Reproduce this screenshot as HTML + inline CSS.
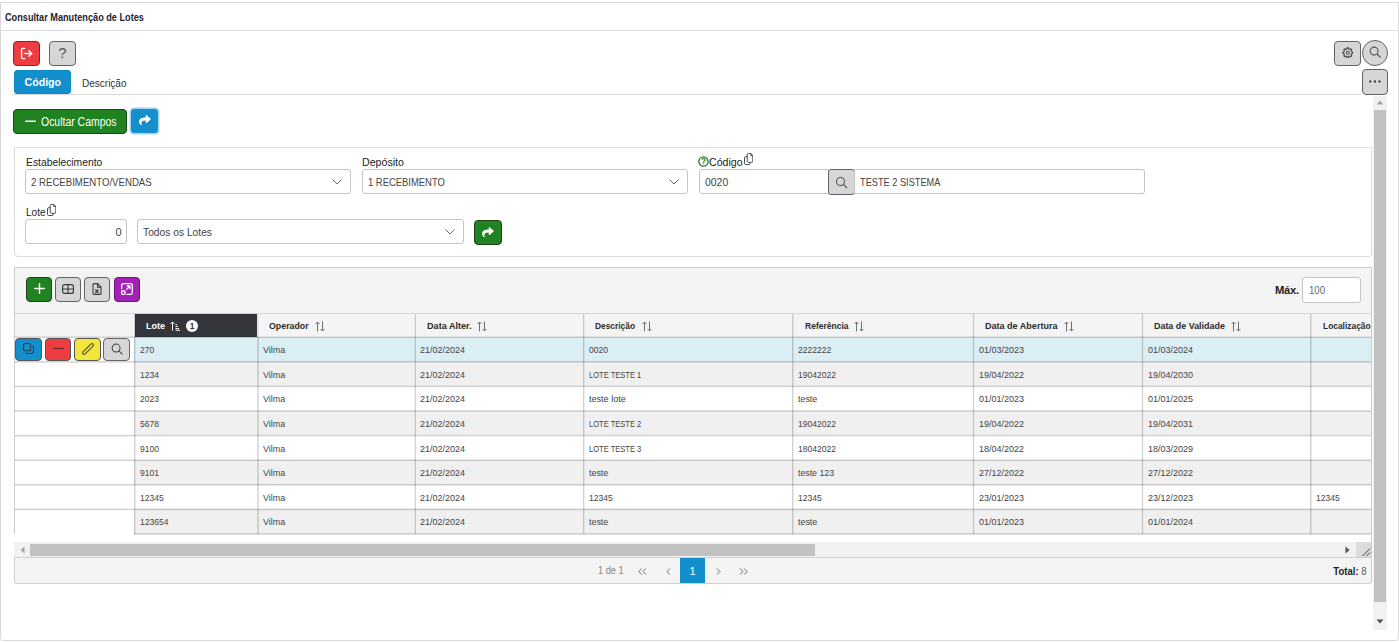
<!DOCTYPE html>
<html lang="pt-BR">
<head>
<meta charset="utf-8">
<title>Consultar Manutenção de Lotes</title>
<style>
*{box-sizing:border-box;margin:0;padding:0}
html,body{width:1399px;height:642px;overflow:hidden;background:#fff}
body{position:relative;font-family:"Liberation Sans","DejaVu Sans",sans-serif;color:#333;font-size:12px}
.abs{position:absolute}
[id]{display:inline-block;transform-origin:0 50%;white-space:nowrap}
.frame{left:0;top:2px;width:1399px;height:639px;border:1px solid #d9d9d9;border-radius:0 0 3px 3px}
.hline{left:1px;height:1px;background:#dedede}
.title{left:5px;top:11px;height:14px;line-height:14px;font-size:10px;font-weight:bold;color:#1f2430;white-space:nowrap}
.btn{border:1px solid #62626a;border-radius:4px;background:#d6d6d6;display:flex;align-items:center;justify-content:center}
.btn svg{display:block}
.u1{position:relative;top:-1px}
.red{background:#ee3d41;border-color:#7a2a2c}
.green{background:#218221;border-color:#1c431c}
.blue{background:#1390cc;border-color:#0d6a99}
.purple{background:#a321b4;border-color:#6a1476}
.yellow{background:#f2e63c;border-color:#7d7720}
.tab{left:14px;top:70px;width:57px;height:24px;background:#1390cc;border:1px solid #0b8ac6;border-radius:3px;color:#fff;font-weight:bold;font-size:11.5px;line-height:22px;text-align:center}
.tab2{left:82px;top:70px;height:24px;line-height:27px;font-size:11px;color:#333}
.panel{border:1px solid #dcdcdc;border-radius:4px;background:#fff}
.lbl{font-size:10.5px;color:#222;height:14px;line-height:14px;white-space:nowrap}
.inp{border:1px solid #c4c4c4;border-radius:3px;background:#fff;height:24px;line-height:22px;font-size:11px;color:#444;padding:0 4.5px;white-space:nowrap;overflow:hidden}
.chev{right:8px;top:9px}
.grid{background:#f4f4f4;border:1px solid #cbcbcb;border-radius:0 0 3px 3px}
.th{top:314px;height:23px;line-height:22px;z-index:2;font-size:9.5px;font-weight:bold;color:#2c2c2c;background:#f4f4f4;white-space:nowrap;overflow:hidden}
.row{left:134px;width:1237px;overflow:hidden}
.ln{z-index:3}
.row i{font-style:normal}
.row span{position:absolute;top:1px;height:calc(100% - 1px);padding-left:4.5px;padding-top:1px;font-size:8.7px;color:#444;white-space:nowrap;display:flex;align-items:center}
.odd{background:#fff}.even{background:#f0f0f0}.sel{background:#daeef4}
/*FIT-START*/
#t_title{transform:scaleX(0.916)}
#t_tab2{transform:scaleX(0.910)}
#t_ocultar{transform:scaleX(0.871)}
#t_estab{transform:scaleX(0.983)}
#t_estabv{transform:scaleX(0.875)}
#t_dep{transform:scaleX(1.013)}
#t_depv{transform:scaleX(0.857)}
#t_cod{transform:scaleX(1.010)}
#t_codv{transform:scaleX(0.948)}
#t_teste2{transform:scaleX(0.838)}
#t_lote{transform:scaleX(0.959)}
#t_todos{transform:scaleX(0.932)}
#t_max{transform:scaleX(1.019)}
#t_100{transform:scaleX(0.871)}
#t_1de1{transform:scaleX(0.907)}
#t_total{transform:scaleX(0.908)}
#h0{transform:scaleX(0.947) translateY(0.6px)}
#h1{transform:scaleX(0.928) translateY(0.6px)}
#h2{transform:scaleX(0.958) translateY(0.6px)}
#h3{transform:scaleX(0.881) translateY(0.6px)}
#h4{transform:scaleX(0.897) translateY(0.6px)}
#h5{transform:scaleX(0.951) translateY(0.6px)}
#h6{transform:scaleX(0.939) translateY(0.6px)}
#h7{transform:scaleX(0.884) translateY(0.6px)}
#c0_0{transform:scaleX(0.981)}
#c0_1{transform:scaleX(1.029)}
#c0_2{transform:scaleX(1.035)}
#c0_3{transform:scaleX(0.981)}
#c0_4{transform:scaleX(0.981)}
#c0_5{transform:scaleX(1.035)}
#c0_6{transform:scaleX(1.035)}
#c1_0{transform:scaleX(0.981)}
#c1_1{transform:scaleX(1.029)}
#c1_2{transform:scaleX(1.035)}
#c1_3{transform:scaleX(0.867)}
#c1_4{transform:scaleX(0.981)}
#c1_5{transform:scaleX(1.035)}
#c1_6{transform:scaleX(1.035)}
#c2_0{transform:scaleX(0.981)}
#c2_1{transform:scaleX(1.029)}
#c2_2{transform:scaleX(1.035)}
#c2_3{transform:scaleX(1.044)}
#c2_4{transform:scaleX(1.024)}
#c2_5{transform:scaleX(1.035)}
#c2_6{transform:scaleX(1.035)}
#c3_0{transform:scaleX(0.981)}
#c3_1{transform:scaleX(1.029)}
#c3_2{transform:scaleX(1.035)}
#c3_3{transform:scaleX(0.867)}
#c3_4{transform:scaleX(0.981)}
#c3_5{transform:scaleX(1.035)}
#c3_6{transform:scaleX(1.035)}
#c4_0{transform:scaleX(0.981)}
#c4_1{transform:scaleX(1.029)}
#c4_2{transform:scaleX(1.035)}
#c4_3{transform:scaleX(0.867)}
#c4_4{transform:scaleX(0.981)}
#c4_5{transform:scaleX(1.035)}
#c4_6{transform:scaleX(1.035)}
#c5_0{transform:scaleX(0.981)}
#c5_1{transform:scaleX(1.029)}
#c5_2{transform:scaleX(1.035)}
#c5_3{transform:scaleX(1.024)}
#c5_4{transform:scaleX(1.007)}
#c5_5{transform:scaleX(1.035)}
#c5_6{transform:scaleX(1.035)}
#c6_0{transform:scaleX(0.980)}
#c6_1{transform:scaleX(1.029)}
#c6_2{transform:scaleX(1.035)}
#c6_3{transform:scaleX(0.980)}
#c6_4{transform:scaleX(0.980)}
#c6_5{transform:scaleX(1.035)}
#c6_6{transform:scaleX(1.035)}
#c6_7{transform:scaleX(0.980)}
#c7_0{transform:scaleX(0.981)}
#c7_1{transform:scaleX(1.029)}
#c7_2{transform:scaleX(1.035)}
#c7_3{transform:scaleX(1.024)}
#c7_4{transform:scaleX(1.024)}
#c7_5{transform:scaleX(1.035)}
#c7_6{transform:scaleX(1.035)}
/*FIT-END*/
</style>
</head>
<body>
<div class="abs frame"></div>
<div class="abs title"><span id="t_title">Consultar Manutenção de Lotes</span></div>
<div class="abs hline" style="top:30px;width:1397px"></div>

<!-- top toolbar -->
<div class="abs btn red" style="left:13px;top:41px;width:27px;height:25px">
<svg width="13" height="13" viewBox="0 0 14 14" fill="none" stroke="#fff" stroke-width="1.5" stroke-linecap="round" stroke-linejoin="round" style="margin-top:-1px"><path d="M5 1.5H2.8C2.1 1.5 1.7 1.9 1.7 2.6v8.8c0 .7.4 1.1 1.1 1.1H5"/><path d="M5.2 7h7.3M9.6 4l3 3-3 3"/></svg>
</div>
<div class="abs btn" style="left:49px;top:41px;width:27px;height:25px;font-size:15px;color:#555;padding-bottom:2px">?</div>
<div class="abs btn" style="left:1334px;top:41px;width:27px;height:25px"><svg width="11.5" height="11.5" viewBox="0 0 13 13" class="u1" fill="none" stroke="#454545" stroke-width="1.15" stroke-linejoin="round"><path d="M12.02 5.54 L12.02 7.46 L10.79 7.46 L10.22 8.86 L11.08 9.72 L9.72 11.08 L8.86 10.22 L7.46 10.79 L7.46 12.02 L5.54 12.02 L5.54 10.79 L4.14 10.22 L3.28 11.08 L1.92 9.72 L2.78 8.86 L2.21 7.46 L0.98 7.46 L0.98 5.54 L2.21 5.54 L2.78 4.14 L1.92 3.28 L3.28 1.92 L4.14 2.78 L5.54 2.21 L5.54 0.98 L7.46 0.98 L7.46 2.21 L8.86 2.78 L9.72 1.92 L11.08 3.28 L10.22 4.14 L10.79 5.54Z"/><circle cx="6.5" cy="6.5" r="1.7"/></svg></div>
<div class="abs btn" style="left:1362px;top:40px;width:26px;height:26px;border-radius:13px"><svg class="u1" width="13" height="13" viewBox="0 0 14 14" fill="none" stroke="#555" stroke-width="1.2" style="margin-left:1px"><circle cx="5.5" cy="5.5" r="4.3"/><path d="M8.6 8.6l4 4"/></svg></div>
<div class="abs btn" style="left:1362px;top:69px;width:26px;height:26px"><svg width="12" height="3" viewBox="0 0 12 3" fill="#2b2b40" style="margin-top:-1px"><rect x="0.3" y="0.5" width="2" height="2"/><rect x="4.9" y="0.5" width="2" height="2"/><rect x="9.5" y="0.5" width="2" height="2"/></svg></div>

<div class="abs tab"><span id="t_tab1" style="transform-origin:50% 50%;transform:scaleX(.92)">Código</span></div>
<div class="abs tab2"><span id="t_tab2">Descrição</span></div>
<div class="abs hline" style="top:94px;left:12px;width:1350px;background:#d9d9d9"></div>

<!-- action bar -->
<div class="abs btn green" style="left:13px;top:109px;width:114px;height:25px;color:#fff;font-size:12px;justify-content:flex-start;padding-left:11px;white-space:nowrap">
<svg width="11" height="3" viewBox="0 0 11 3" style="margin-right:5px;flex-shrink:0"><rect x="0" y="0.5" width="11" height="1.6" rx="0.8" fill="#fff"/></svg><span id="t_ocultar">Ocultar Campos</span>
</div>
<div class="abs btn blue" style="left:131px;top:109px;width:27px;height:24px;box-shadow:0 0 0 1.5px #a4d3f2;border-color:#1591cf;border-radius:3px">
<svg class="u1" width="12" height="10" viewBox="0 0 512 440" fill="#fff"><path d="M503.7 189.8L327.7 37.9C312.3 24.5 288 35.3 288 56v80C127.4 137.9 0 170.1 0 322.3c0 61.4 39.6 122.3 83.3 154.1 13.7 9.9 33.1-2.5 28.1-18.6C66.1 312.8 133 274.3 288 272.1V360c0 20.7 24.3 31.5 39.7 18.2l176-152c11-9.6 11-26.800 0-36.4z" transform="translate(0,-30)"/></svg>
</div>

<!-- fields panel -->
<div class="abs panel" style="left:14px;top:147px;width:1358px;height:110px;border-radius:0 0 3px 4px"></div>
<div class="abs lbl" style="left:26px;top:155px"><span id="t_estab">Estabelecimento</span></div>
<div class="abs inp" style="left:25px;top:169px;height:25px;line-height:24px;width:326px"><span id="t_estabv">2 RECEBIMENTO/VENDAS</span>
<svg class="abs chev" width="10" height="6" viewBox="0 0 10 6" fill="none" stroke="#6a6a6a" stroke-width="1"><path d="M0.5 0.5L5 5l4.500-4.500"/></svg></div>
<div class="abs lbl" style="left:362px;top:155px"><span id="t_dep">Depósito</span></div>
<div class="abs inp" style="left:362px;top:169px;height:25px;line-height:24px;width:326px"><span id="t_depv">1 RECEBIMENTO</span>
<svg class="abs chev" width="10" height="6" viewBox="0 0 10 6" fill="none" stroke="#6a6a6a" stroke-width="1"><path d="M0.5 0.5L5 5l4.500-4.500"/></svg></div>

<svg class="abs" style="left:698px;top:156px" width="11" height="11" viewBox="0 0 11 11"><circle cx="5.500" cy="5.500" r="4.600" fill="none" stroke="#218221" stroke-width="1.400"/></svg>
<div class="abs" style="left:698px;top:155px;width:11px;height:12px;line-height:13px;text-align:center;font-size:8.500px;font-weight:bold;color:#1e7e1e">?</div>
<div class="abs lbl" style="left:709px;top:155px"><span id="t_cod">Código</span></div>
<svg class="abs" style="left:744.3px;top:153.2px" width="9" height="12" viewBox="0 0 9 12" fill="none" stroke="#3a3a3a" stroke-width="0.9"><path d="M4.400 0.500h2.400l2 2v5.600a1.200 1.200 0 0 1-1.200 1.200h-3.200a1.200 1.200 0 0 1-1.200-1.200v-6.400a1.200 1.200 0 0 1 1.200-1.200z"/><path d="M6.800 0.500v2h2"/><path d="M3.200 3.700h-1.500a1.200 1.200 0 0 0-1.200 1.200v5.400a1.200 1.200 0 0 0 1.200 1.200h3.300a1.200 1.200 0 0 0 1.200-1.200v-1"/></svg>
<div class="abs inp" style="left:699px;top:169px;height:25px;line-height:24px;width:130px;border-radius:3px 0 0 3px"><span id="t_codv">0020</span></div>
<div class="abs btn" style="left:828px;top:169px;width:27px;height:26px;border-radius:3px">
<svg width="13" height="13" viewBox="0 0 13 13" fill="none" stroke="#555" stroke-width="1.100"><circle cx="5.500" cy="5.500" r="4"/><path d="M8.500 8.500l3.500 3.500"/></svg></div>
<div class="abs inp" style="left:854px;top:169px;height:25px;line-height:24px;width:291px;border-radius:0 3px 3px 0"><span id="t_teste2">TESTE 2 SISTEMA</span></div>

<div class="abs lbl" style="left:26px;top:205px"><span id="t_lote">Lote</span></div>
<svg class="abs" style="left:46.8px;top:203.8px" width="9" height="12" viewBox="0 0 9 12" fill="none" stroke="#3a3a3a" stroke-width="0.9"><path d="M4.400 0.500h2.400l2 2v5.600a1.200 1.200 0 0 1-1.200 1.200h-3.200a1.200 1.200 0 0 1-1.200-1.200v-6.400a1.200 1.200 0 0 1 1.200-1.200z"/><path d="M6.800 0.500v2h2"/><path d="M3.200 3.700h-1.500a1.200 1.200 0 0 0-1.200 1.200v5.400a1.200 1.200 0 0 0 1.200 1.200h3.300a1.200 1.200 0 0 0 1.200-1.200v-1"/></svg>
<div class="abs inp" style="left:25px;top:219px;height:25px;line-height:24px;width:102px;text-align:right">0</div>
<div class="abs inp" style="left:137px;top:219px;height:25px;line-height:24px;width:327px"><span id="t_todos">Todos os Lotes</span>
<svg class="abs chev" width="10" height="6" viewBox="0 0 10 6" fill="none" stroke="#6a6a6a" stroke-width="1"><path d="M0.500 0.500L5 5l4.500-4.500"/></svg></div>
<div class="abs btn green" style="left:474px;top:220px;width:28px;height:25px">
<svg class="u1" width="12" height="10" viewBox="0 0 512 440" fill="#fff"><path d="M503.700 189.800L327.700 37.900C312.300 24.500 288 35.300 288 56v80C127.400 137.900 0 170.100 0 322.300c0 61.400 39.600 122.300 83.300 154.100 13.700 9.900 33.100-2.500 28.100-18.600C66.100 312.800 133 274.300 288 272.100V360c0 20.700 24.300 31.500 39.700 18.200l176-152c11-9.600 11-26.800 0-36.400z" transform="translate(0,-30)"/></svg>
</div>

<!-- GRID-START -->
<!-- grid -->
<div class="abs grid" style="left:14px;top:267px;width:1358px;height:317px"></div>
<div class="abs btn green" style="left:26px;top:277px;width:26px;height:25px"><svg width="11" height="11" viewBox="0 0 12 12" stroke="#fff" stroke-width="1.600" stroke-linecap="round" class="u1"><path d="M6 0.800v10.400M0.800 6h10.400"/></svg></div>
<div class="abs btn" style="left:55px;top:277px;width:26px;height:25px"><svg width="12" height="10" viewBox="0 0 12 10" fill="none" stroke="#3c3c44" stroke-width="1.200" class="u1"><rect x="0.600" y="0.600" width="10.800" height="8.800" rx="2"/><path d="M6 0.600v8.800M0.600 5h10.800"/></svg></div>
<div class="abs btn" style="left:84px;top:277px;width:26px;height:25px"><svg width="10" height="12" viewBox="0 0 10 12" fill="none" stroke="#3c3c44" stroke-width="1.100" class="u1"><path d="M2 0.600h3.500l3.500 3.500v6.300a1 1 0 0 1-1 1h-6a1 1 0 0 1-1-1v-8.800a1 1 0 0 1 1-1z"/><path d="M5.500 0.600v3.500h3.500"/><path d="M3.300 6.300l3.200 3.700M6.500 6.300l-3.200 3.700" stroke-width="1.200"/></svg></div>
<div class="abs btn purple" style="left:114px;top:277px;width:26px;height:25px"><svg width="12" height="12" viewBox="0 0 12 12" fill="none" stroke="#fff" stroke-width="1.300" stroke-linecap="round" stroke-linejoin="round" class="u1"><path d="M0.700 5.500V2.200a1.500 1.500 0 0 1 1.500-1.500h7.600a1.500 1.500 0 0 1 1.500 1.500v7.600a1.500 1.500 0 0 1-1.500 1.500H6"/><rect x="0.700" y="7.800" width="3.300" height="3.500" rx="0.800"/><path d="M5.600 6.400l3.200-3.200M6.300 3h2.700v2.700"/></svg></div>
<div class="abs" style="left:1275px;top:283px;height:14px;line-height:14px;font-size:11px;font-weight:bold;color:#222;letter-spacing:-0.3px"><span id="t_max">Máx.</span></div>
<div class="abs inp" style="left:1302px;top:277px;width:59px;height:26px;line-height:25px;font-size:11px;padding-left:5.500px;color:#5f6b78"><span id="t_100">100</span></div>
<div class="abs" style="left:15px;top:313px;width:1356px;height:1px;background:#d4d4d4"></div>
<div class="abs th" style="left:135px;width:122px;background:#35363b;color:#fff;padding-left:10.7px"><span id="h0">Lote</span><svg class="abs" width="11" height="10" viewBox="0 0 11 10" fill="none" stroke="#fff" stroke-width="1" style="left:35px;top:7px"><path d="M2.500 9.500V1M0.500 3L2.500 1l2 2"/><path d="M5.500 3.500h1.500M5.500 5.500h2.500M5.500 7.500h3.500M5.500 9.300h4.500" stroke-width="1.100"/></svg><span class="abs" style="left:51px;top:6px;width:12px;height:12px;border-radius:6px;background:#fff;color:#35363b;font-size:8.500px;line-height:12px;text-align:center">1</span></div>
<div class="abs th" style="left:258px;width:157px;padding-left:11.3px"><span id="h1">Operador</span><svg class="abs" width="10" height="11" viewBox="0 0 10 11" fill="none" stroke="#707070" stroke-width="1" style="top:7px;left:57.3px"><path d="M2.500 10.500V1M0.500 3L2.500 1l2 2M7.500 0.500V10M5.500 8l2 2 2-2"/></svg></div>
<div class="abs th" style="left:415px;width:169px;padding-left:11.6px"><span id="h2">Data Alter.</span><svg class="abs" width="10" height="11" viewBox="0 0 10 11" fill="none" stroke="#707070" stroke-width="1" style="top:7px;left:61.7px"><path d="M2.500 10.500V1M0.500 3L2.500 1l2 2M7.500 0.500V10M5.500 8l2 2 2-2"/></svg></div>
<div class="abs th" style="left:584px;width:209px;padding-left:11.4px"><span id="h3">Descrição</span><svg class="abs" width="10" height="11" viewBox="0 0 10 11" fill="none" stroke="#707070" stroke-width="1" style="top:7px;left:57.5px"><path d="M2.500 10.500V1M0.500 3L2.500 1l2 2M7.500 0.500V10M5.500 8l2 2 2-2"/></svg></div>
<div class="abs th" style="left:793px;width:181px;padding-left:11.8px"><span id="h4">Referência</span><svg class="abs" width="10" height="11" viewBox="0 0 10 11" fill="none" stroke="#707070" stroke-width="1" style="top:7px;left:60.8px"><path d="M2.500 10.500V1M0.500 3L2.500 1l2 2M7.500 0.500V10M5.500 8l2 2 2-2"/></svg></div>
<div class="abs th" style="left:974px;width:169px;padding-left:11.3px"><span id="h5">Data de Abertura</span><svg class="abs" width="10" height="11" viewBox="0 0 10 11" fill="none" stroke="#707070" stroke-width="1" style="top:7px;left:89.9px"><path d="M2.500 10.500V1M0.500 3L2.500 1l2 2M7.500 0.500V10M5.500 8l2 2 2-2"/></svg></div>
<div class="abs th" style="left:1143px;width:168px;padding-left:11.1px"><span id="h6">Data de Validade</span><svg class="abs" width="10" height="11" viewBox="0 0 10 11" fill="none" stroke="#707070" stroke-width="1" style="top:7px;left:88.1px"><path d="M2.500 10.500V1M0.500 3L2.500 1l2 2M7.500 0.500V10M5.500 8l2 2 2-2"/></svg></div>
<div class="abs th" style="left:1311px;width:60px;padding-left:11.7px"><span id="h7">Localização</span></div>
<div class="abs" style="left:15px;top:337.0px;width:120px;height:24.6px;background:#fff"></div>
<div class="abs row sel" style="top:337.0px;height:24.6px"><span style="left:1px;width:123px"><i id="c0_0">270</i></span><span style="left:124px;width:157px"><i id="c0_1">Vilma</i></span><span style="left:281px;width:169px"><i id="c0_2">21/02/2024</i></span><span style="left:450px;width:209px"><i id="c0_3">0020</i></span><span style="left:659px;width:181px"><i id="c0_4">2222222</i></span><span style="left:840px;width:169px"><i id="c0_5">01/03/2023</i></span><span style="left:1009px;width:168px"><i id="c0_6">01/03/2024</i></span><span style="left:1177px;width:189px"><i id="c0_7"></i></span></div>
<div class="abs" style="left:15px;top:361.6px;width:120px;height:24.6px;background:#fff"></div>
<div class="abs row even" style="top:361.6px;height:24.6px"><span style="left:1px;width:123px"><i id="c1_0">1234</i></span><span style="left:124px;width:157px"><i id="c1_1">Vilma</i></span><span style="left:281px;width:169px"><i id="c1_2">21/02/2024</i></span><span style="left:450px;width:209px"><i id="c1_3">LOTE TESTE 1</i></span><span style="left:659px;width:181px"><i id="c1_4">19042022</i></span><span style="left:840px;width:169px"><i id="c1_5">19/04/2022</i></span><span style="left:1009px;width:168px"><i id="c1_6">19/04/2030</i></span><span style="left:1177px;width:189px"><i id="c1_7"></i></span></div>
<div class="abs" style="left:15px;top:386.2px;width:120px;height:24.6px;background:#fff"></div>
<div class="abs row odd" style="top:386.2px;height:24.6px"><span style="left:1px;width:123px"><i id="c2_0">2023</i></span><span style="left:124px;width:157px"><i id="c2_1">Vilma</i></span><span style="left:281px;width:169px"><i id="c2_2">21/02/2024</i></span><span style="left:450px;width:209px"><i id="c2_3">teste lote</i></span><span style="left:659px;width:181px"><i id="c2_4">teste</i></span><span style="left:840px;width:169px"><i id="c2_5">01/01/2023</i></span><span style="left:1009px;width:168px"><i id="c2_6">01/01/2025</i></span><span style="left:1177px;width:189px"><i id="c2_7"></i></span></div>
<div class="abs" style="left:15px;top:410.8px;width:120px;height:24.6px;background:#fff"></div>
<div class="abs row even" style="top:410.8px;height:24.6px"><span style="left:1px;width:123px"><i id="c3_0">5678</i></span><span style="left:124px;width:157px"><i id="c3_1">Vilma</i></span><span style="left:281px;width:169px"><i id="c3_2">21/02/2024</i></span><span style="left:450px;width:209px"><i id="c3_3">LOTE TESTE 2</i></span><span style="left:659px;width:181px"><i id="c3_4">19042022</i></span><span style="left:840px;width:169px"><i id="c3_5">19/04/2022</i></span><span style="left:1009px;width:168px"><i id="c3_6">19/04/2031</i></span><span style="left:1177px;width:189px"><i id="c3_7"></i></span></div>
<div class="abs" style="left:15px;top:435.4px;width:120px;height:24.6px;background:#fff"></div>
<div class="abs row odd" style="top:435.4px;height:24.6px"><span style="left:1px;width:123px"><i id="c4_0">9100</i></span><span style="left:124px;width:157px"><i id="c4_1">Vilma</i></span><span style="left:281px;width:169px"><i id="c4_2">21/02/2024</i></span><span style="left:450px;width:209px"><i id="c4_3">LOTE TESTE 3</i></span><span style="left:659px;width:181px"><i id="c4_4">18042022</i></span><span style="left:840px;width:169px"><i id="c4_5">18/04/2022</i></span><span style="left:1009px;width:168px"><i id="c4_6">18/03/2029</i></span><span style="left:1177px;width:189px"><i id="c4_7"></i></span></div>
<div class="abs" style="left:15px;top:460.0px;width:120px;height:24.6px;background:#fff"></div>
<div class="abs row even" style="top:460.0px;height:24.6px"><span style="left:1px;width:123px"><i id="c5_0">9101</i></span><span style="left:124px;width:157px"><i id="c5_1">Vilma</i></span><span style="left:281px;width:169px"><i id="c5_2">21/02/2024</i></span><span style="left:450px;width:209px"><i id="c5_3">teste</i></span><span style="left:659px;width:181px"><i id="c5_4">teste 123</i></span><span style="left:840px;width:169px"><i id="c5_5">27/12/2022</i></span><span style="left:1009px;width:168px"><i id="c5_6">27/12/2022</i></span><span style="left:1177px;width:189px"><i id="c5_7"></i></span></div>
<div class="abs" style="left:15px;top:484.6px;width:120px;height:24.6px;background:#fff"></div>
<div class="abs row odd" style="top:484.6px;height:24.6px"><span style="left:1px;width:123px"><i id="c6_0">12345</i></span><span style="left:124px;width:157px"><i id="c6_1">Vilma</i></span><span style="left:281px;width:169px"><i id="c6_2">21/02/2024</i></span><span style="left:450px;width:209px"><i id="c6_3">12345</i></span><span style="left:659px;width:181px"><i id="c6_4">12345</i></span><span style="left:840px;width:169px"><i id="c6_5">23/01/2023</i></span><span style="left:1009px;width:168px"><i id="c6_6">23/12/2023</i></span><span style="left:1177px;width:189px"><i id="c6_7">12345</i></span></div>
<div class="abs" style="left:15px;top:509.2px;width:120px;height:24.6px;background:#fff"></div>
<div class="abs row even" style="top:509.2px;height:24.6px"><span style="left:1px;width:123px"><i id="c7_0">123654</i></span><span style="left:124px;width:157px"><i id="c7_1">Vilma</i></span><span style="left:281px;width:169px"><i id="c7_2">21/02/2024</i></span><span style="left:450px;width:209px"><i id="c7_3">teste</i></span><span style="left:659px;width:181px"><i id="c7_4">teste</i></span><span style="left:840px;width:169px"><i id="c7_5">01/01/2023</i></span><span style="left:1009px;width:168px"><i id="c7_6">01/01/2024</i></span><span style="left:1177px;width:189px"><i id="c7_7"></i></span></div>
<div class="abs" style="left:15px;top:533.8px;width:1356px;height:10px;background:#fff"></div>
<div class="abs ln" style="left:15px;top:336px;width:1356px;height:1px;background:rgba(0,0,0,0.087)"></div>
<div class="abs ln" style="left:15px;top:337px;width:1356px;height:1px;background:rgba(0,0,0,0.175)"></div>
<div class="abs ln" style="left:15px;top:361px;width:1356px;height:1px;background:rgba(0,0,0,0.159)"></div>
<div class="abs ln" style="left:15px;top:362px;width:1356px;height:1px;background:rgba(0,0,0,0.103)"></div>
<div class="abs ln" style="left:15px;top:385px;width:1356px;height:1px;background:rgba(0,0,0,0.056)"></div>
<div class="abs ln" style="left:15px;top:386px;width:1356px;height:1px;background:rgba(0,0,0,0.175)"></div>
<div class="abs ln" style="left:15px;top:387px;width:1356px;height:1px;background:rgba(0,0,0,0.032)"></div>
<div class="abs ln" style="left:15px;top:410px;width:1356px;height:1px;background:rgba(0,0,0,0.128)"></div>
<div class="abs ln" style="left:15px;top:411px;width:1356px;height:1px;background:rgba(0,0,0,0.135)"></div>
<div class="abs ln" style="left:15px;top:434px;width:1356px;height:1px;background:rgba(0,0,0,0.024)"></div>
<div class="abs ln" style="left:15px;top:435px;width:1356px;height:1px;background:rgba(0,0,0,0.175)"></div>
<div class="abs ln" style="left:15px;top:436px;width:1356px;height:1px;background:rgba(0,0,0,0.063)"></div>
<div class="abs ln" style="left:15px;top:459px;width:1356px;height:1px;background:rgba(0,0,0,0.096)"></div>
<div class="abs ln" style="left:15px;top:460px;width:1356px;height:1px;background:rgba(0,0,0,0.166)"></div>
<div class="abs ln" style="left:15px;top:484px;width:1356px;height:1px;background:rgba(0,0,0,0.168)"></div>
<div class="abs ln" style="left:15px;top:485px;width:1356px;height:1px;background:rgba(0,0,0,0.094)"></div>
<div class="abs ln" style="left:15px;top:508px;width:1356px;height:1px;background:rgba(0,0,0,0.065)"></div>
<div class="abs ln" style="left:15px;top:509px;width:1356px;height:1px;background:rgba(0,0,0,0.175)"></div>
<div class="abs ln" style="left:15px;top:510px;width:1356px;height:1px;background:rgba(0,0,0,0.023)"></div>
<div class="abs ln" style="left:134px;top:533px;width:1237px;height:1px;background:rgba(0,0,0,0.136)"></div>
<div class="abs ln" style="left:134px;top:534px;width:1237px;height:1px;background:rgba(0,0,0,0.126)"></div>
<div class="abs ln" style="left:134px;top:314px;width:1px;height:220px;background:rgba(0,0,0,0.175)"></div>
<div class="abs ln" style="left:135px;top:314px;width:1px;height:220px;background:rgba(0,0,0,0.070)"></div>
<div class="abs ln" style="left:257px;top:314px;width:1px;height:23px;background:rgba(0,0,0,0.059)"></div>
<div class="abs ln" style="left:257px;top:337px;width:1px;height:197px;background:rgba(0,0,0,0.131)"></div>
<div class="abs ln" style="left:258px;top:314px;width:1px;height:23px;background:rgba(0,0,0,0.059)"></div>
<div class="abs ln" style="left:258px;top:337px;width:1px;height:197px;background:rgba(0,0,0,0.131)"></div>
<div class="abs ln" style="left:414px;top:314px;width:1px;height:220px;background:rgba(0,0,0,0.052)"></div>
<div class="abs ln" style="left:415px;top:314px;width:1px;height:220px;background:rgba(0,0,0,0.175)"></div>
<div class="abs ln" style="left:583px;top:314px;width:1px;height:220px;background:rgba(0,0,0,0.175)"></div>
<div class="abs ln" style="left:584px;top:314px;width:1px;height:220px;background:rgba(0,0,0,0.061)"></div>
<div class="abs ln" style="left:792px;top:314px;width:1px;height:220px;background:rgba(0,0,0,0.175)"></div>
<div class="abs ln" style="left:793px;top:314px;width:1px;height:220px;background:rgba(0,0,0,0.079)"></div>
<div class="abs ln" style="left:972px;top:314px;width:1px;height:220px;background:rgba(0,0,0,0.026)"></div>
<div class="abs ln" style="left:973px;top:314px;width:1px;height:220px;background:rgba(0,0,0,0.175)"></div>
<div class="abs ln" style="left:974px;top:314px;width:1px;height:220px;background:rgba(0,0,0,0.026)"></div>
<div class="abs ln" style="left:1141px;top:314px;width:1px;height:220px;background:rgba(0,0,0,0.026)"></div>
<div class="abs ln" style="left:1142px;top:314px;width:1px;height:220px;background:rgba(0,0,0,0.175)"></div>
<div class="abs ln" style="left:1143px;top:314px;width:1px;height:220px;background:rgba(0,0,0,0.026)"></div>
<div class="abs ln" style="left:1310px;top:314px;width:1px;height:220px;background:rgba(0,0,0,0.166)"></div>
<div class="abs ln" style="left:1311px;top:314px;width:1px;height:220px;background:rgba(0,0,0,0.096)"></div>
<div class="abs btn blue" style="left:15px;top:338px;width:27px;height:23px;border-color:#555"><svg class="u1" width="11" height="11" viewBox="0 0 12 12" fill="none" stroke="#24414f" stroke-width="1.200"><rect x="0.600" y="0.600" width="7.800" height="7.800" rx="2.200"/><path d="M10.300 3.300c.7.300 1.100.9 1.100 1.700v4.400c0 1.100-.9 2-2 2H5c-.8 0-1.400-.4-1.700-1.100"/></svg></div>
<div class="abs btn red" style="left:45px;top:338px;width:26px;height:23px;border-color:#555"><svg class="u1" width="11" height="3" viewBox="0 0 11 3"><rect x="0" y="0.900" width="11" height="1.200" fill="#7a2326"/></svg></div>
<div class="abs btn yellow" style="left:74px;top:338px;width:27px;height:23px;border-color:#555"><svg class="u1" width="12" height="12" viewBox="0 0 12 12" fill="none" stroke="#4a4717" stroke-width="1"><rect x="-1" y="4.500" width="14" height="3" rx="1.500" transform="rotate(-45 6 6)"/></svg></div>
<div class="abs btn" style="left:103px;top:338px;width:27px;height:23px;border-color:#666"><svg class="u1" width="12" height="12" viewBox="0 0 13 13" fill="none" stroke="#444" stroke-width="1.100"><circle cx="5.500" cy="5.500" r="4.300"/><path d="M8.600 8.600l3.800 3.800"/></svg></div>
<div class="abs" style="left:14px;top:534px;width:1px;height:23px;background:#fff"></div>
<div class="abs" style="left:14px;top:542px;width:1357px;height:15px;background:#f1f1f1"></div>
<div class="abs" style="left:30px;top:544px;width:785px;height:12px;background:#c1c1c1"></div>
<svg class="abs" style="left:20px;top:546px" width="5" height="8" viewBox="0 0 5 8"><path d="M4.500 0.500v7L0.500 4z" fill="#a3a3a3"/></svg>
<svg class="abs" style="left:1345px;top:546px" width="5" height="8" viewBox="0 0 5 8"><path d="M0.500 0.500v7L4.500 4z" fill="#505050"/></svg>
<div class="abs" style="left:1356px;top:542px;width:15px;height:15px;background:#dcdcdc"></div>
<svg class="abs" style="left:1361px;top:547px" width="10" height="10" viewBox="0 0 10 10" stroke="#444" stroke-width="1" fill="none"><path d="M1.500 9L9 1.500M5.500 9L9 5.500"/></svg>
<div class="abs" style="left:14px;top:557px;width:1358px;height:27px;background:#f4f4f4;border:1px solid #cfcfcf;border-radius:0 0 3px 3px"></div>
<div class="abs" style="left:598px;top:564px;height:14px;line-height:14px;font-size:10.200px;color:#858585"><span id="t_1de1">1 de 1</span></div>
<svg class="abs" style="left:638px;top:567.500px" width="9" height="7" viewBox="0 0 9 7" fill="none" stroke="#6e6e6e" stroke-width="1"><path d="M3.700 0.500L0.800 3.500 3.700 6.500M7.900 0.500L5 3.500 7.900 6.500"/></svg>
<svg class="abs" style="left:665.500px;top:567.500px" width="5" height="7" viewBox="0 0 5 7" fill="none" stroke="#6e6e6e" stroke-width="1"><path d="M3.900 0.500L1 3.500 3.900 6.500"/></svg>
<div class="abs" style="left:680px;top:558px;width:25px;height:25px;background:#1390cc;color:#fff;font-size:11px;line-height:27px;text-align:center">1</div>
<svg class="abs" style="left:715.500px;top:567.500px" width="5" height="7" viewBox="0 0 5 7" fill="none" stroke="#6e6e6e" stroke-width="1"><path d="M1 0.500L3.900 3.500 1 6.500"/></svg>
<svg class="abs" style="left:738.500px;top:567.500px" width="9" height="7" viewBox="0 0 9 7" fill="none" stroke="#6e6e6e" stroke-width="1"><path d="M1 0.500L3.900 3.500 1 6.500M5.200 0.500L8.100 3.500 5.200 6.500"/></svg>
<div class="abs" style="right:32px;top:564px;height:14px;line-height:14px;font-size:10.500px;color:#555;white-space:nowrap"><span id="t_total" style="transform-origin:100% 50%"><b style="color:#222">Total:</b> 8</span></div>
<div class="abs" style="left:1373px;top:96px;width:14px;height:534px;background:#f1f1f1"></div>
<div class="abs" style="left:1374px;top:110px;width:12px;height:492px;background:#c1c1c1"></div>
<svg class="abs" style="left:1376px;top:100px" width="8" height="5" viewBox="0 0 8 5"><path d="M0.500 4.500h7L4 0.500z" fill="#a3a3a3"/></svg>
<svg class="abs" style="left:1376px;top:619px" width="8" height="5" viewBox="0 0 8 5"><path d="M0.500 0.500h7L4 4.500z" fill="#505050"/></svg>
<!-- GRID-END -->
</body>
</html>
